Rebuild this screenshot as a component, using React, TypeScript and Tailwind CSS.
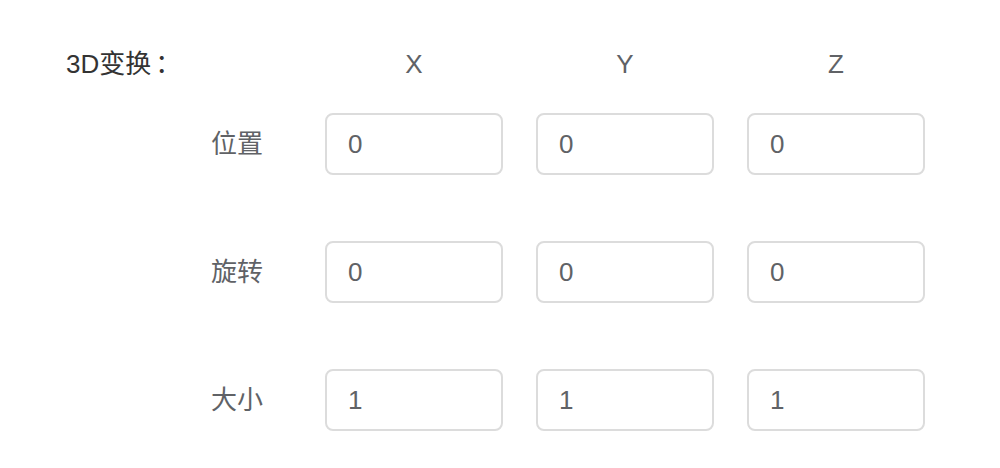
import React from "react";

const FONT = '"Liberation Sans", "Noto Sans CJK SC", sans-serif';

const rows = [
  { label: "位置", values: ["0", "0", "0"] },
  { label: "旋转", values: ["0", "0", "0"] },
  { label: "大小", values: ["1", "1", "1"] },
];

export default function App() {
  return (
    <div
      className="w-[1000px] h-[468px] bg-white pt-[33px] pl-[66px]"
      style={{ fontFamily: FONT }}
    >
      <div className="flex h-[62px] items-center">
        <div className="w-[259px] text-[26px] text-[#333333]">
          3D变换<span className="ml-[4px]">：</span>
        </div>
        <div className="grid grid-cols-[178px_178px_178px] gap-x-[33px] text-[26px] text-[#606266]">
          {["X", "Y", "Z"].map((axis) => (
            <div key={axis} className="text-center">
              {axis}
            </div>
          ))}
        </div>
      </div>
      <div className="mt-[18px] flex flex-col gap-[66px]">
        {rows.map((row) => (
          <div key={row.label} className="flex h-[62px] items-center">
            <div className="w-[259px] pl-[145px] text-[26px] text-[#606266]">
              {row.label}
            </div>
            <div className="grid grid-cols-[178px_178px_178px] gap-x-[33px]">
              {row.values.map((v, i) => (
                <input
                  key={i}
                  defaultValue={v}
                  className="h-[62px] w-[178px] rounded-[8px] border-2 border-[#dcdcdc] bg-white pl-[21px] text-[26px] text-[#606266] outline-none"
                  style={{ fontFamily: FONT }}
                />
              ))}
            </div>
          </div>
        ))}
      </div>
    </div>
  );
}
